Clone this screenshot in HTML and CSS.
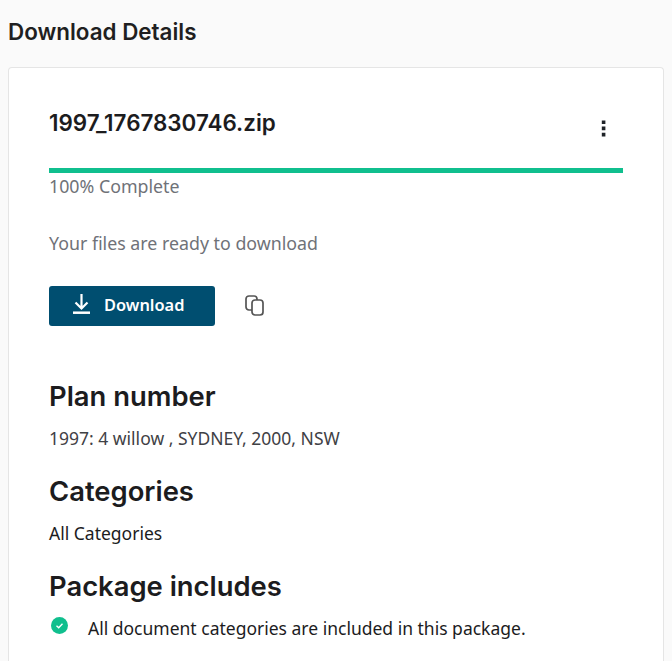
FILE: index.html
```html
<!DOCTYPE html>
<html lang="en">
<head>
<meta charset="utf-8">
<title>Download Details</title>
<link rel="stylesheet" href="styles.css">
</head>
<body>
<main class="page">
  <h1 class="page-title">Download Details</h1>
  <section class="card">
    <div class="file-row">
      <h2 class="file-name">1997_1767830746.zip</h2>
      <button class="more" aria-label="More options">
        <svg width="24" height="24" viewBox="0 0 24 24"><path fill="#1f2328" d="M10.800 4.400h3.600v3.600h-3.600zM10.800 10.600h3.600v3.600h-3.600zM10.800 16.800h3.600v3.600h-3.600z"/></svg>
      </button>
    </div>
    <div class="progress"><div class="progress-fill"></div></div>
    <p class="muted complete">100% Complete</p>
    <p class="muted ready">Your files are ready to download</p>
    <div class="actions">
      <button class="download">
        <svg width="20" height="22" viewBox="0 0 20 22" fill="none" stroke="#fff"><path stroke-width="2.200" d="M9.500 0v14.500M3.500 8.500l6 6 6-6"/><path stroke-width="2.500" d="M1 18.700h17"/></svg>
        <span>Download</span>
      </button>
      <button class="copy" aria-label="Copy">
        <svg width="22" height="22" viewBox="0 0 22 22" fill="none" stroke="#555" stroke-width="1.700"><path d="M8 15H5A3 3 0 0 1 2 12V4A3 3 0 0 1 5 1H10A3 3 0 0 1 13 4V5"/><rect x="8" y="5" width="11" height="15" rx="3"/></svg>
      </button>
    </div>
    <h3 class="section-title plan">Plan number</h3>
    <p class="section-text plan-text">1997: 4 willow , SYDNEY, 2000, NSW</p>
    <h3 class="section-title">Categories</h3>
    <p class="section-text dark">All Categories</p>
    <h3 class="section-title">Package includes</h3>
    <div class="include">
      <svg class="check" width="17" height="17" viewBox="0 0 17 17"><circle cx="8.500" cy="8.500" r="8.500" fill="#10bf8e"/><path d="M5.500 8.700 7.700 10.700 11.500 6.800" fill="none" stroke="#fff" stroke-width="1.400"/></svg>
      <span>All document categories are included in this package.</span>
    </div>
  </section>
</main>
</body>
</html>
```

FILE: styles.css
```css
* { box-sizing: border-box; }
html, body { margin: 0; height: 100%; overflow: hidden; }
body { background: #fafafa; font-family: "Noto Sans", sans-serif; color: #1c1c1e; }
.page { padding: 19px 8px 0; height: 100%; }
.page-title { margin: 0 0 22px; font: 600 22.400px/26px Inter, sans-serif; color: #1f1f21; }
.card { background: #fff; border: 1px solid #e5e5e5; border-bottom: 0; border-radius: 4px 4px 0 0; padding: 40px 40px 0; height: 594px; overflow: hidden; }
.file-row { display: flex; justify-content: space-between; align-items: flex-start; height: 60px; }
.file-name { margin: 0; font: 600 22.400px/30px Inter, sans-serif; color: #1c1c1e; }
.more { border: 0; background: none; padding: 0; margin: 8px 8px 0 0; width: 24px; height: 24px; }
.progress { height: 5px; background: #e5e5e5; }
.progress-fill { height: 100%; width: 100%; background: #10bf8e; }
.muted { margin: 0; color: #6f7278; font-size: 17.800px; line-height: 24px; }
.complete { margin-top: 1px; }
.ready { margin-top: 33px; }
.actions { display: flex; align-items: center; gap: 29px; margin-top: 31px; }
.download { display: flex; align-items: center; gap: 12px; width: 166px; height: 40px; padding: 0 0 2px 23px; border: 0; border-radius: 3px; background: #004e70; color: #fff; font: 600 16.400px/24px "Noto Sans", sans-serif; }
.copy { border: 0; background: none; padding: 0; width: 22px; height: 22px; }
.section-title { margin: 0; font: 600 27.400px/36px Inter, sans-serif; color: #1c1c1e; }
.plan { margin-top: 52px; }
.section-text { margin: 12px 0 23px; font-size: 17.500px; line-height: 24px; color: #3f4145; }
.dark { color: #1c1c1e; }
.include { display: flex; align-items: flex-start; gap: 20px; margin-top: 12px; margin-left: 2px; font-size: 17.500px; line-height: 24px; color: #1c1c1e; }
.check { margin-top: 1px; }
```
